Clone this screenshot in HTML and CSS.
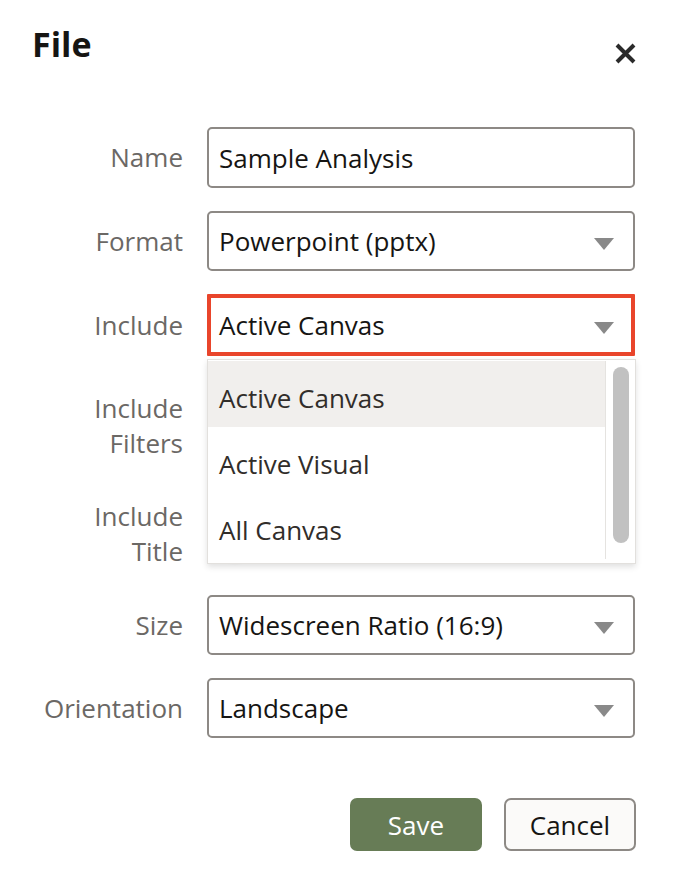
FILE: index.html
```html
<!DOCTYPE html>
<html lang="en">
<head>
<meta charset="utf-8">
<title>File</title>
<link rel="stylesheet" href="styles.css">
</head>
<body>
<div class="dialog">
  <header class="head">
    <h1 class="title">File</h1>
    <button class="close" aria-label="Close">
      <svg width="21" height="21" viewBox="0 0 21 21"><path d="M2 2 L19 19 M19 2 L2 19" stroke="#2b2b2b" stroke-width="4" fill="none"/></svg>
    </button>
  </header>
  <div class="form">
    <div class="lbl">Name</div>
    <div class="field">Sample Analysis</div>

    <div class="lbl">Format</div>
    <div class="field select">Powerpoint (pptx)<span class="arrow"></span></div>

    <div class="lbl">Include</div>
    <div class="field select focus">Active Canvas<span class="arrow"></span>
      <div class="menu">
        <div class="menu-list">
          <div class="item hl">Active Canvas</div>
          <div class="item">Active Visual</div>
          <div class="item">All Canvas</div>
        </div>
        <div class="scroll"><span class="thumb"></span></div>
      </div>
    </div>

    <div class="lbl two">Include<br>Filters</div>
    <div class="tcell"><span class="toggle"><span class="knob"></span></span></div>

    <div class="lbl two">Include<br>Title</div>
    <div class="tcell"><span class="toggle"><span class="knob"></span></span></div>

    <div class="lbl">Size</div>
    <div class="field select">Widescreen Ratio (16:9)<span class="arrow"></span></div>

    <div class="lbl">Orientation</div>
    <div class="field select">Landscape<span class="arrow"></span></div>
  </div>
  <footer class="actions">
    <button class="btn save">Save</button>
    <button class="btn cancel">Cancel</button>
  </footer>
</div>
</body>
</html>
```
FILE: styles.css
```css
* { box-sizing: border-box; }
html, body { margin: 0; padding: 0; background: #ffffff; }
body { font-family: "Open Sans", "Noto Sans", sans-serif; }

.dialog { width: 678px; height: 890px; }

.head {
  display: flex;
  justify-content: space-between;
  align-items: flex-start;
  padding: 24px 42px 0 32px;
}
.title {
  margin: 0;
  font-size: 34px;
  line-height: 40px;
  font-weight: 700;
  color: #161513;
}
.close {
  margin-top: 19px;
  padding: 0;
  border: 0;
  background: none;
  width: 21px;
  height: 21px;
  display: block;
}
.close svg { display: block; }

.form {
  margin-top: 63px;
  display: grid;
  grid-template-columns: 183px 428px;
  grid-template-rows: 61px 60px 62px 85px 85px 60px 60px;
  column-gap: 24px;
  row-gap: 23px;
}

.lbl {
  font-size: 26px;
  color: #6b6865;
  text-align: right;
  align-self: center;
  line-height: 35px;
}
.lbl.two { align-self: end; margin-bottom: 3px; }

.field {
  position: relative;
  border: 2px solid #8d8985;
  border-radius: 5px;
  padding: 0 10px;
  font-size: 26px;
  color: #161513;
  display: flex;
  align-items: center;
  background: #fff;
}
.field.focus {
  border: 4px solid #e9452b;
  border-radius: 1px;
  padding: 0 8px;
}
.arrow {
  position: absolute;
  right: 19px;
  top: 50%;
  margin-top: -3px;
  width: 0;
  height: 0;
  border-left: 10px solid transparent;
  border-right: 10px solid transparent;
  border-top: 12px solid #898989;
}
.focus .arrow { right: 17px; }

.menu {
  position: absolute;
  left: -4px;
  top: calc(100% + 7px);
  width: 429px;
  height: 205px;
  border: 1px solid #e2e0dd;
  background: #fff;
  box-shadow: 0 3px 6px rgba(0, 0, 0, 0.12);
  display: flex;
  padding: 1px 0 4px 0;
  z-index: 5;
}
.menu-list { flex: 1; }
.item {
  height: 66px;
  padding: 10px 11px 0;
  line-height: 54px;
  font-size: 26px;
  color: #312d2a;
}
.item.hl { background: #f1efed; }
.scroll {
  width: 30px;
  border-left: 1px solid #e5e3e0;
  padding: 6px 6px 0 7px;
}
.thumb {
  display: block;
  width: 16px;
  height: 176px;
  border-radius: 8px;
  background: #c1c1c1;
}

.tcell { display: flex; align-items: flex-end; padding: 0 0 18px 16px; }
.toggle {
  position: relative;
  width: 48px;
  height: 22px;
  border-radius: 11px;
  background: #b5b3b1;
}
.knob {
  position: absolute;
  left: -2px;
  top: -3px;
  width: 28px;
  height: 28px;
  border-radius: 50%;
  background: #fff;
  box-shadow: 0 4px 4px rgba(0, 0, 0, 0.3);
}

.actions {
  display: flex;
  justify-content: flex-end;
  gap: 22px;
  padding: 60px 42px 0 0;
}
.btn {
  width: 132px;
  height: 53px;
  border-radius: 7px;
  font-family: "Open Sans", "Noto Sans", sans-serif;
  font-size: 26px;
  padding: 0;
}
.save {
  background: #677c56;
  border: 0;
  color: #ffffff;
}
.cancel {
  background: #fbfaf9;
  border: 2px solid #8d8985;
  color: #161513;
}
```
